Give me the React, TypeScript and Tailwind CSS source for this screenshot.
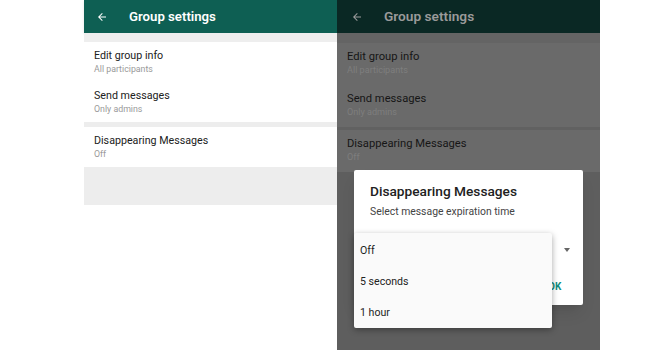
import React from 'react';

const font = { fontFamily: 'Roboto, "Noto Sans", "Liberation Sans", sans-serif' };

function BackArrow({ color }: { color: string }) {
  return (
    <svg width="12" height="12" viewBox="0 0 24 24" fill={color}>
      <path d="M20 11H7.83l5.59-5.59L12 4l-8 8 8 8 1.41-1.41L7.83 13H20v-2z" />
    </svg>
  );
}

function Row({ title, sub, dim, h }: { title: string; sub: string; dim?: boolean; h: string }) {
  return (
    <div className={`${h} px-[10px] pt-[7px] flex flex-col`}>
      <span
        className={
          dim
            ? 'text-[11.2px] leading-[14px] text-[#161616]'
            : 'text-[10.7px] leading-[14px] text-[#212121]'
        }
      >
        {title}
      </span>
      <span
        className={
          dim
            ? 'text-[9.1px] leading-[13px] text-[#7e7e7e]'
            : 'text-[8.8px] leading-[13px] text-[#9a9a9a]'
        }
      >
        {sub}
      </span>
    </div>
  );
}

function LeftPanel() {
  return (
    <div className="w-[253px] flex flex-col">
      <div className="h-[33px] bg-[#0e5f53] flex items-center pl-[12px] shadow-sm">
        <BackArrow color="#ffffff" />
        <span className="ml-[21px] text-white text-[13.2px] font-semibold">Group settings</span>
      </div>
      <div className="h-[9px] bg-[#eeeeee]" />
      <div className="bg-white">
        <Row h="h-[40px]" title="Edit group info" sub="All participants" />
        <Row h="h-[40px]" title="Send messages" sub="Only admins" />
      </div>
      <div className="h-[5px] bg-[#ededed]" />
      <div className="bg-white">
        <Row h="h-[40px]" title="Disappearing Messages" sub="Off" />
      </div>
      <div className="h-[38px] bg-[#ededed]" />
    </div>
  );
}

function RightPanel() {
  return (
    <div className="w-[263px] h-[350px] bg-[#5e5e5e] relative flex flex-col">
      <div className="h-[33px] bg-[#0a2824] flex items-center pl-[14px]">
        <BackArrow color="#9c9c9c" />
        <span className="ml-[21px] text-[#9a9a9a] text-[13.7px] font-semibold">Group settings</span>
      </div>
      <div className="h-[10px] bg-[#646464]" />
      <div className="bg-[#6a6a6a]">
        <Row dim h="h-[42px]" title="Edit group info" sub="All participants" />
        <Row dim h="h-[42px]" title="Send messages" sub="Only admins" />
      </div>
      <div className="h-[3px] bg-[#616161]" />
      <div className="bg-[#6a6a6a]">
        <Row dim h="h-[42px]" title="Disappearing Messages" sub="Off" />
      </div>

      <div className="absolute left-[17px] top-[170px] w-[229px] h-[135px] bg-white shadow-lg rounded-[2px]">
        <div className="pl-[16px] pt-[12px] text-[13.7px] leading-[18px] font-medium text-[#212121]">
          Disappearing Messages
        </div>
        <div className="pl-[16px] pt-[5px] text-[10.4px] leading-[14px] text-[#444444]">
          Select message expiration time
        </div>
        <div className="absolute right-[13px] top-[78px] w-0 h-0 border-l-[3.5px] border-r-[3.5px] border-t-[4px] border-l-transparent border-r-transparent border-t-[#666666]" />
        <span className="absolute left-[194px] top-[109px] text-[10px] font-bold text-[#128c7e]">OK</span>
      </div>

      <div className="absolute left-[17px] top-[233px] w-[198px] pt-[2px] bg-[#fafafa] rounded-[2px] shadow-[0_2px_6px_rgba(0,0,0,0.35)]">
        {['Off', '5 seconds', '1 hour'].map(t => (
          <div key={t} className="h-[31px] flex items-center pl-[6px] text-[10.6px] text-[#222222]">
            {t}
          </div>
        ))}
      </div>
    </div>
  );
}

export default function App() {
  return (
    <div className="w-[650px] h-[350px] bg-white flex overflow-hidden" style={font}>
      <div className="w-[84px]" />
      <LeftPanel />
      <RightPanel />
    </div>
  );
}
